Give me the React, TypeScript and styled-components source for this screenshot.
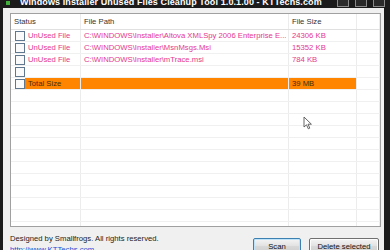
import styled, { createGlobalStyle } from "styled-components";

const GlobalStyle = createGlobalStyle`
  html, body {
    margin: 0;
    padding: 0;
    background: #1b1b1b;
  }
  body {
    font-family: "Liberation Sans", Arial, sans-serif;
    overflow: hidden;
  }
`;

type FileRow = {
  status: string;
  path: string;
  size: string;
};

const files: FileRow[] = [
  {
    status: "UnUsed File",
    path: "C:\\WINDOWS\\Installer\\Altova XMLSpy 2006 Enterprise E...",
    size: "24306 KB",
  },
  {
    status: "UnUsed File",
    path: "C:\\WINDOWS\\Installer\\MsnMsgs.Msi",
    size: "15352 KB",
  },
  {
    status: "UnUsed File",
    path: "C:\\WINDOWS\\Installer\\mTrace.msi",
    size: "784 KB",
  },
];

const Window = styled.div`
  width: 390px;
  height: 250px;
  display: flex;
  flex-direction: column;
  background: #1b1b1b;
  overflow: hidden;
`;

const TitleBar = styled.div`
  height: 8px;
  flex-shrink: 0;
  display: flex;
  align-items: flex-start;
  padding: 0 5px 0 6px;
  gap: 10px;
  overflow: hidden;
`;

const AppIcon = styled.div`
  width: 4px;
  height: 4px;
  margin-top: 1px;
  background: #3fae3a;
`;

const TitleText = styled.div`
  flex: 1;
  min-width: 0;
  color: #fff;
  font-family: "Liberation Sans", Arial, sans-serif;
  font-weight: bold;
  font-size: 9px;
  line-height: 10px;
  white-space: nowrap;
  overflow: hidden;
  margin-top: -3px;
  letter-spacing: 0.1px;
`;

const WinButtons = styled.div`
  display: flex;
  gap: 6px;
  align-self: stretch;
  flex-shrink: 0;
`;

const WinButton = styled.div`
  width: 10px;
  height: 6px;
  border: 1px solid #8a8a8a;
  border-top: none;
  background: #2a2a2a;
`;

const Body = styled.div`
  flex: 1;
  margin: 0 6px 0 3px;
  background: #f0f0f0;
  padding: 5px 3px 0 7px;
  display: flex;
  flex-direction: column;
  overflow: hidden;
`;

const ListView = styled.div`
  height: 212px;
  flex-shrink: 0;
  border: 1px solid #a0a0a0;
  background: #fff;
  display: flex;
  flex-direction: column;
  overflow: hidden;
  position: relative;
`;

const Row = styled.div<{ $header?: boolean }>`
  display: grid;
  grid-template-columns: 70px 208px 68px 1fr;
  height: ${(p) => (p.$header ? 16 : 12)}px;
  flex-shrink: 0;
  border-bottom: 1px solid ${(p) => (p.$header ? "#e0e0e0" : "#f0f0f0")};
  box-sizing: border-box;
  font-size: 7.7px;
  color: ${(p) => (p.$header ? "#333" : "#e5378f")};
`;

const Cell = styled.div<{ $orange?: boolean }>`
  display: flex;
  align-items: center;
  gap: 3px;
  padding-left: 3px;
  border-right: 1px solid #ececec;
  white-space: nowrap;
  overflow: hidden;
  background: ${(p) => (p.$orange ? "#ff8400" : "transparent")};
  color: ${(p) => (p.$orange ? "#4a2a00" : "inherit")};
`;

const StatusCell = styled(Cell)`
  padding-left: 4px;
  gap: 0;
`;

const StatusLabel = styled.span<{ $orange?: boolean }>`
  display: flex;
  align-items: center;
  align-self: stretch;
  flex: 1;
  padding-left: 3px;
  background: ${(p) => (p.$orange ? "#ff8400" : "transparent")};
  color: ${(p) => (p.$orange ? "#4a2a00" : "inherit")};
`;

const Check = styled.span`
  width: 8px;
  height: 8px;
  border: 1px solid #60788f;
  background: #fafafa;
  flex-shrink: 0;
`;

const Footer = styled.div`
  display: flex;
  align-items: flex-start;
  padding-top: 6px;
`;

const Credits = styled.div`
  flex: 1;
  display: flex;
  flex-direction: column;
  font-size: 7.7px;
  color: #222;
  line-height: 11px;
`;

const Link = styled.a`
  color: #1a4fd6;
  text-decoration: underline;
`;

const Buttons = styled.div`
  display: flex;
  gap: 8px;
  padding-top: 5px;
  margin-right: 2px;
`;

const Button = styled.button<{ $default?: boolean }>`
  height: 16px;
  padding: 0;
  border: 1px solid ${(p) => (p.$default ? "#3c7fb1" : "#707070")};
  border-radius: 2px;
  background: linear-gradient(#f4f4f4, #e2e2e2 50%, #d8d8d8 50%, #cfcfcf);
  box-shadow: inset 0 0 0 1px ${(p) => (p.$default ? "#bfe3f8" : "#fcfcfc")};
  font-family: "Liberation Sans", Arial, sans-serif;
  font-size: 7.7px;
  color: #111;
  width: ${(p) => (p.$default ? 48 : 70)}px;
`;

const Cursor = styled.svg`
  position: absolute;
  left: 292px;
  top: 102px;
`;

function EmptyRow() {
  return (
    <Row>
      <Cell />
      <Cell />
      <Cell />
      <Cell />
    </Row>
  );
}

export default function App() {
  return (
    <>
      <GlobalStyle />
      <Window>
        <TitleBar>
          <AppIcon />
          <TitleText>Windows Installer Unused Files Cleanup Tool 1.0.1.00 - KTTechs.com</TitleText>
          <WinButtons>
            <WinButton />
            <WinButton />
            <WinButton />
          </WinButtons>
        </TitleBar>
        <Body>
          <ListView>
            <Row $header>
              <Cell>Status</Cell>
              <Cell>File Path</Cell>
              <Cell>File Size</Cell>
              <Cell />
            </Row>
            {files.map((f) => (
              <Row key={f.path}>
                <StatusCell>
                  <Check />
                  <StatusLabel>{f.status}</StatusLabel>
                </StatusCell>
                <Cell>{f.path}</Cell>
                <Cell>{f.size}</Cell>
                <Cell />
              </Row>
            ))}
            <Row>
              <StatusCell>
                <Check />
              </StatusCell>
              <Cell />
              <Cell />
              <Cell />
            </Row>
            <Row>
              <StatusCell>
                <Check />
                <StatusLabel $orange>Total Size</StatusLabel>
              </StatusCell>
              <Cell $orange />
              <Cell $orange>39 MB</Cell>
              <Cell />
            </Row>
            {Array.from({ length: 12 }, (_, i) => (
              <EmptyRow key={i} />
            ))}
            <Cursor width="10" height="14" viewBox="0 0 10 14">
              <path
                d="M1 1 L1 11 L3.5 8.8 L5.3 12.8 L6.8 12.1 L5 8.2 L8.4 8.2 Z"
                fill="#fff"
                stroke="#555"
                strokeWidth="0.9"
                strokeLinejoin="round"
              />
            </Cursor>
          </ListView>
          <Footer>
            <Credits>
              <span>Designed by Smallfrogs. All rights reserved.</span>
              <Link href="#">http://www.KTTechs.com</Link>
            </Credits>
            <Buttons>
              <Button $default>Scan</Button>
              <Button>Delete selected</Button>
            </Buttons>
          </Footer>
        </Body>
      </Window>
    </>
  );
}
